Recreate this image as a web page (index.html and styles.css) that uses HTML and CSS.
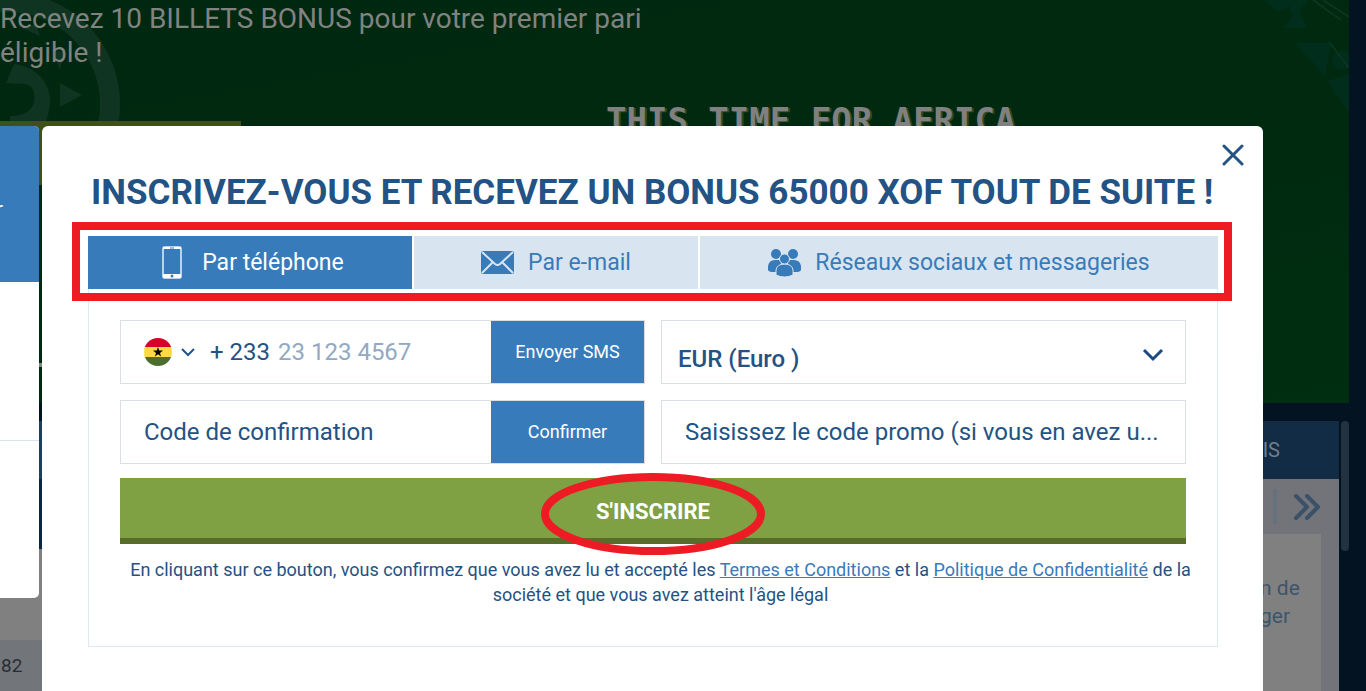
FILE: index.html
```html
<!DOCTYPE html>
<html lang="fr">
<head>
  <meta charset="UTF-8" />
  <meta name="viewport" content="width=device-width, initial-scale=1.0"/>
  <title>Inscription</title>
  <link rel="stylesheet" href="styles.css">
</head>
<body>
  <div class="page">
    <section class="hero">
      <svg class="hero-ball" width="122" height="190" viewBox="0 0 122 190" aria-hidden="true">
        <circle cx="8" cy="104" r="102" fill="none" stroke="#0f3522" stroke-width="20"/>
        <path d="M6 83L14 64C32 66 48 78 50 98C50 108 48 116 46 122H10V116C22 116 32 112 34 102C36 92 32 86 26 84Z" fill="#0f3522"/>
        <path d="M60 83L82 95L60 107Z" fill="#0f3522"/>
        <path d="M22 28L36 24L40 36ZM52 50L64 52L60 70Z" fill="#0f3522"/>
      </svg>
      <svg class="hero-pattern" width="110" height="115" viewBox="0 0 110 115" aria-hidden="true">
        <g fill="#002d1c">
          <path d="M25 0H70L60 10L68 28H44L54 16L50 6L40 12Z"/>
          <path d="M56 43H92L86 76Z"/>
          <circle cx="103" cy="60" r="10"/>
          <path d="M88 81L110 74V112Z"/>
        </g>
        <path d="M74 0L102 20M84 0L110 17M90 42L110 68" fill="none" stroke="#0c3520" stroke-width="2"/>
      </svg>
      <p class="hero-text">Recevez 10 BILLETS BONUS pour votre premier pari éligible !</p>
      <div class="hero-button"></div>
      <div class="hero-slogan">THIS TIME FOR AFRICA</div>
      <div class="hero-progress"></div>
    </section>
    <div class="content">
      <div class="games">
        <div class="games-tabs"></div>
        <div class="games-filter"></div>
        <div class="games-list"></div>
        <div class="games-row">82</div>
      </div>
      <aside class="coupon">
        <div class="coupon-head">IS</div>
        <div class="coupon-nav">
          <span class="coupon-sep"></span>
          <svg width="28" height="28" viewBox="0 0 28 28" aria-hidden="true">
            <path d="M3 3L14 14L3 25M14 3L25 14L14 25" fill="none" stroke="#3b5168" stroke-width="4" stroke-linecap="round" stroke-linejoin="round"/>
          </svg>
        </div>
        <div class="coupon-card"><p>n de<br>ger</p></div>
      </aside>
      <div class="scrollbar"></div>
    </div>
  </div>

  <div class="overlay">
    <div class="side">
      <div class="side-active">r</div>
      <div class="side-item"></div>
      <div class="side-item"></div>
    </div>

    <main class="modal">
      <button class="close" type="button" aria-label="Fermer">
        <svg width="22" height="22" viewBox="0 0 22 22"><path d="M2 2L20 20M20 2L2 20" fill="none" stroke="#235284" stroke-width="3" stroke-linecap="round"/></svg>
      </button>
      <h1>INSCRIVEZ-VOUS ET RECEVEZ UN BONUS 65000 XOF TOUT DE SUITE !</h1>

      <div class="tabs">
        <button class="tab active" type="button">
          <svg width="20" height="33" viewBox="0 0 20 33" aria-hidden="true">
            <rect x="1" y="1" width="18" height="31" rx="2" fill="none" stroke="#b9d3ea" stroke-width="2"/>
            <path d="M1 1H19V3H1ZM1 28H19V32H1Z" fill="#fff"/>
            <path d="M8 2H12" stroke="#387bba"/>
            <circle cx="10" cy="30" r="1.500" fill="#387bba"/>
          </svg>
          Par téléphone
        </button>
        <button class="tab" type="button">
          <svg width="33" height="23" viewBox="0 0 33 23" aria-hidden="true">
            <rect width="33" height="23" rx="2" fill="#387bba"/>
            <path d="M1 1L14 13Q16.500 15 19 13L32 1M1 22L12 11M32 22L21 11" fill="none" stroke="#d8e5f0" stroke-width="2"/>
          </svg>
          Par e-mail
        </button>
        <button class="tab" type="button">
          <svg width="33" height="28" viewBox="0 0 33 28" aria-hidden="true">
            <g fill="#387bba">
              <circle cx="8" cy="5" r="5"/>
              <circle cx="25" cy="5" r="5"/>
              <path d="M0 21V17Q1 11 7 11H13V23H5Q1 23 0 21ZM33 21V17Q32 11 26 11H20V23H28Q32 23 33 21Z"/>
            </g>
            <g fill="#387bba" stroke="#d8e5f0" stroke-width="1">
              <path d="M8 26V21Q9 15 16.500 15Q24 15 25 21V26Q21 28 16.500 28Q12 28 8 26Z"/>
              <circle cx="16.500" cy="10" r="5"/>
            </g>
          </svg>
          Réseaux sociaux et messageries
        </button>
        <div class="mark-box"></div>
      </div>

      <form class="form">
        <div class="fields">
          <div class="field">
            <button class="country" type="button" aria-label="Ghana">
              <svg width="28" height="28" viewBox="0 0 28 28">
                <clipPath id="flag"><circle cx="14" cy="14" r="14"/></clipPath>
                <g clip-path="url(#flag)">
                  <rect width="28" height="9" fill="#d80027"/>
                  <rect y="9" width="28" height="10" fill="#ffda44"/>
                  <rect y="19" width="28" height="9" fill="#496e2d"/>
                </g>
                <path d="M14 9L15.200 12.600H19L16 14.900L17.100 18.500L14 16.300L10.900 18.500L12 14.900L9 12.600H12.800Z" fill="#000"/>
              </svg>
              <svg width="16" height="10" viewBox="0 0 16 10"><path d="M2 2L8 8L14 2" fill="none" stroke="#235284" stroke-width="2"/></svg>
            </button>
            <label class="prefix" for="phone">+ 233</label>
            <input class="phone" id="phone" type="tel" placeholder="23 123 4567">
            <button class="send" type="button">Envoyer SMS</button>
          </div>
          <div class="field select-field">
            <select aria-label="Devise">
              <option>EUR (Euro )</option>
            </select>
            <svg class="arrow" width="22" height="14" viewBox="0 0 22 14" aria-hidden="true"><path d="M2 2L11 11L20 2" fill="none" stroke="#1a4a80" stroke-width="3"/></svg>
          </div>
          <div class="field">
            <input class="code" type="text" aria-label="Code de confirmation" placeholder="Code de confirmation">
            <button class="send" type="button">Confirmer</button>
          </div>
          <div class="field">
            <input class="code" type="text" aria-label="Code promo" placeholder="Saisissez le code promo (si vous en avez u...">
          </div>
        </div>

        <div class="submit-wrap">
          <button class="submit" type="submit">S'INSCRIRE</button>
          <svg class="mark-oval" width="226" height="84" viewBox="0 0 226 84" aria-hidden="true"><ellipse cx="113" cy="42" rx="108" ry="37" fill="none" stroke="#ed1c24" stroke-width="8"/></svg>
        </div>

        <p class="terms">En cliquant sur ce bouton, vous confirmez que vous avez lu et accepté les <a href="#">Termes et Conditions</a> et la <a href="#">Politique de Confidentialité</a> de la société et que vous avez atteint l'âge légal</p>
      </form>
    </main>
  </div>
</body>
</html>
```
FILE: styles.css
```css
* {
  box-sizing: border-box;
}
body {
  margin: 0;
  height: 100vh;
  overflow: hidden;
  position: relative;
  font-family: Roboto, "Liberation Sans", sans-serif;
  background: #041321;
  color: #235284;
}
button, input, select {
  font-family: inherit;
  margin: 0;
  border: none;
}
button {
  cursor: pointer;
}

/* page behind the popup */
.page {
  display: flex;
  flex-direction: column;
  height: 100vh;
}
.hero {
  position: relative;
  flex: none;
  height: 403px;
  margin-right: 17px;
  padding-top: 2px;
  background: linear-gradient(170deg, #002810 0%, #002a10 60%, #002e10 100%);
}
.hero-ball {
  position: absolute;
  left: 0;
  top: 0;
}
.hero-pattern {
  position: absolute;
  right: 0;
  top: 0;
}
.hero-text {
  position: relative;
  margin: 0;
  max-width: 660px;
  font-size: 28px;
  line-height: 34px;
  color: #808380;
}
.hero-button {
  position: absolute;
  left: 0;
  top: 121px;
  width: 241px;
  height: 64px;
  background: #40501a;
}
.hero-slogan {
  position: absolute;
  left: 606px;
  top: 100px;
  font-family: "DejaVu Sans Mono", monospace;
  font-size: 34px;
  line-height: 40px;
  font-weight: bold;
  color: #808080;
  text-shadow: 2px 1px 0 #2f4a25;
  white-space: nowrap;
}
.hero-progress {
  position: absolute;
  left: 0;
  top: 363px;
  width: 100px;
  height: 4px;
  background: #80857f;
}
.content {
  flex: 1;
  display: flex;
  gap: 2px;
  padding: 18px 17px 0 0;
}
.games {
  flex: 1;
  display: flex;
  flex-direction: column;
  background: #808080;
}
.games-tabs {
  height: 58px;
  background: #1d4062;
}
.games-filter {
  height: 70px;
  background: #0a2644;
}
.games-list {
  flex: 1;
}
.games-row {
  height: 51px;
  padding-left: 1px;
  background: #72757a;
  font-size: 19px;
  line-height: 52px;
  color: #292d33;
}
.coupon {
  display: flex;
  flex-direction: column;
  width: 300px;
  margin-left: -2px;
  background: #72747a;
}
.coupon-head {
  height: 58px;
  padding-right: 59px;
  background: #122c46;
  font-size: 20px;
  line-height: 58px;
  text-align: right;
  color: #747e89;
}
.coupon-nav {
  display: flex;
  justify-content: flex-end;
  align-items: center;
  gap: 16px;
  height: 55px;
  padding-right: 18px;
}
.coupon-sep {
  width: 4px;
  height: 35px;
  background: #65717b;
}
.coupon-card {
  flex: 1;
  margin-right: 18px;
  padding-top: 40px;
  background: #808080;
}
.coupon-card p {
  width: 61px;
  margin: 0 0 0 auto;
  font-size: 21px;
  line-height: 28px;
  color: #3e546a;
}
.scrollbar {
  width: 8px;
  height: 130px;
  border-radius: 4px;
  background: #23323f;
}

/* popup */
.overlay {
  position: absolute;
  inset: 0;
  display: flex;
  align-items: flex-start;
  gap: 3px;
  padding: 126px 103px 0 0;
}
.side {
  width: 39px;
  overflow: hidden;
  border-radius: 0 5px 5px 0;
  background: #fff;
}
.side-active {
  display: flex;
  justify-content: flex-end;
  align-items: center;
  height: 156px;
  padding: 10px 36px 0 0;
  background: #387bba;
  font-size: 22px;
  color: #fff;
}
.side-item {
  height: 158px;
}
.side-item + .side-item {
  border-top: 1px solid #d7e4ee;
}
.modal {
  position: relative;
  flex: 1;
  min-height: calc(100vh - 126px);
  padding: 45px 45px 20px 46px;
  border-radius: 6px 6px 0 0;
  background: #fff;
}
.close {
  position: absolute;
  top: 18px;
  right: 19px;
  padding: 0;
  background: none;
}
.close svg {
  display: block;
}
h1 {
  margin: 0 -40px 21px 3px;
  font-size: 35px;
  line-height: 44px;
  font-weight: 700;
  white-space: nowrap;
}
.tabs {
  position: relative;
  display: grid;
  grid-template-columns: 324fr 284fr 518fr;
  gap: 2px;
}
.tab {
  display: flex;
  justify-content: center;
  align-items: center;
  gap: 14px;
  height: 53px;
  padding: 0;
  background: #d8e5f0;
  font-size: 23px;
  color: #387bba;
}
.tab.active {
  gap: 20px;
  padding-left: 6px;
  background: #387bba;
  color: #fff;
}
/* red marks over the tabs and the submit button */
.mark-box {
  position: absolute;
  inset: -14px -14px -12px -16px;
  border: 8px solid #ed1c24;
}
.mark-oval {
  position: absolute;
  left: 50%;
  top: -6px;
  transform: translateX(-50%);
}
.form {
  padding: 31px 31px 39px;
  border: 1px solid #dfe9f1;
  border-top: none;
}
.fields {
  display: grid;
  grid-template-columns: repeat(2, minmax(0, 1fr));
  gap: 16px;
}
.field {
  position: relative;
  display: flex;
  align-items: center;
  height: 64px;
  border: 1px solid #d9dfe4;
}
.field input {
  flex: 1;
  min-width: 0;
  height: 100%;
  outline: none;
  background: none;
  font-size: 24px;
  color: #235284;
}
.code {
  padding: 0 20px 0 23px;
}
.code::placeholder {
  color: #235284;
  opacity: 1;
}
.country {
  display: flex;
  align-items: center;
  gap: 8px;
  padding: 0 0 0 23px;
  background: none;
}
.prefix {
  padding-left: 14px;
  font-size: 24px;
}
.phone {
  padding: 0 8px;
}
.phone::placeholder {
  color: #91a9c2;
  opacity: 1;
}
.send {
  width: 153px;
  height: 100%;
  padding: 0 0 2px;
  background: #387bba;
  font-size: 18px;
  color: #fff;
}
.select-field select {
  width: 100%;
  height: 100%;
  padding: 14px 50px 0 16px;
  appearance: none;
  background: none;
  font-size: 24px;
  font-weight: 500;
  color: #235284;
}
.arrow {
  position: absolute;
  right: 21px;
  top: 27px;
  pointer-events: none;
}
.submit-wrap {
  position: relative;
  margin-top: 14px;
}
.submit {
  display: block;
  width: 100%;
  height: 66px;
  padding: 6px 0 0;
  border-bottom: 6px solid #586d2b;
  background: #7fa144;
  font-size: 22px;
  font-weight: 700;
  color: #fff;
}
.terms {
  margin: 13px -15px 0 0;
  font-size: 18px;
  line-height: 25px;
  text-align: center;
}
.terms a {
  color: #387bba;
}
```
